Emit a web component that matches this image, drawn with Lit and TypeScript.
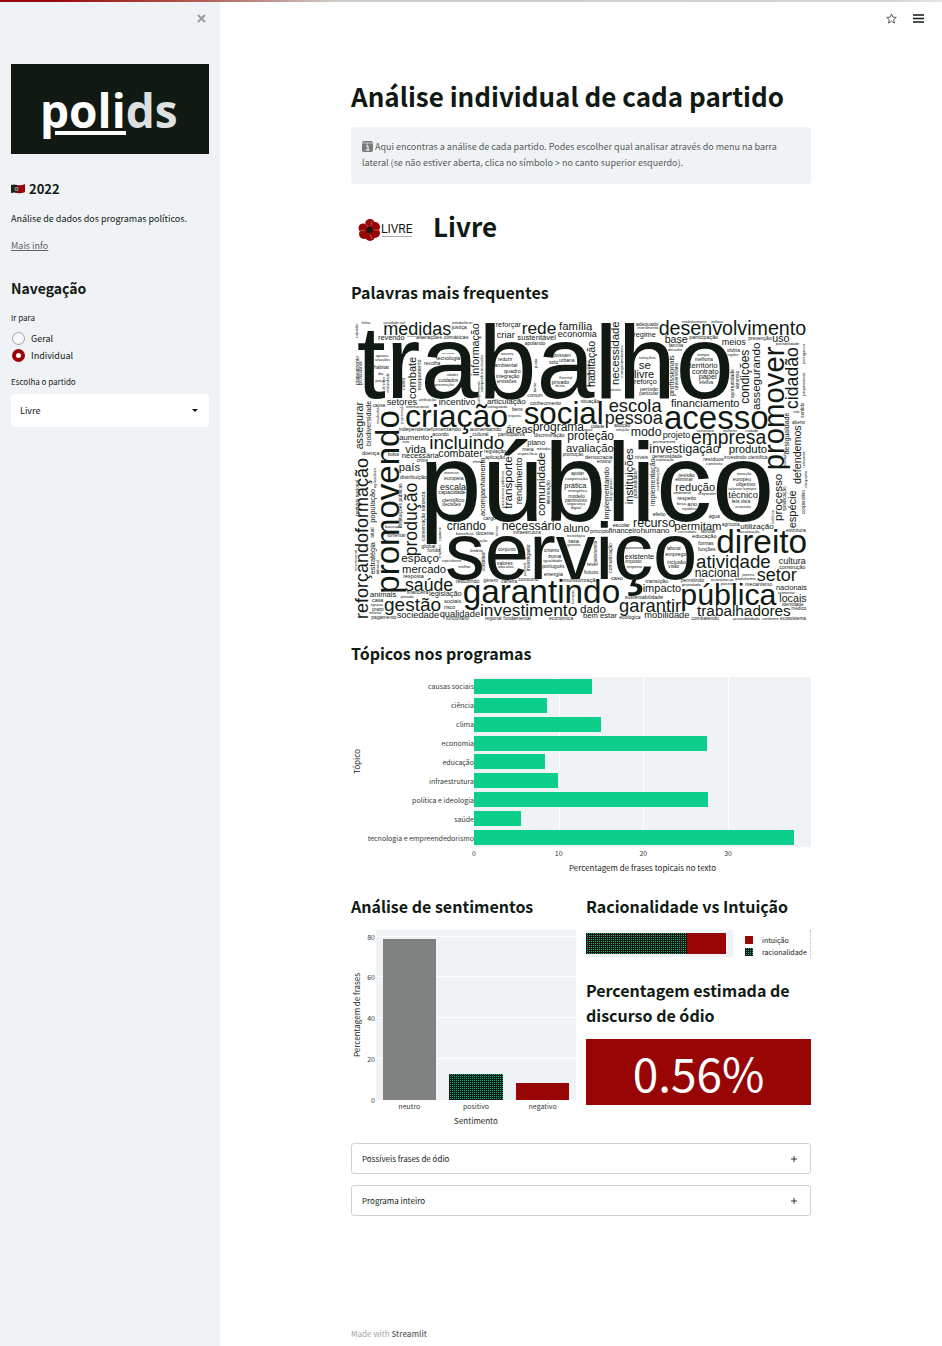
import { LitElement, html, svg, css } from "lit";
import { customElement, property } from "lit/decorators.js";
import { styleMap } from "lit/directives/style-map.js";

/** text, start, baseline, length of the word on the canvas */
type Word = [string, number, number, number];

const ACROSS: Word[] = [
  ["trabalho", 20, 262, 1130], ["público", 208, 630, 1066], ["serviço", 285, 803, 757],
  ["medidas", 100, 72, 205], ["reforçar", 437, 47, 77], ["rede", 515, 69, 105], ["família", 627, 58, 100],
  ["criar", 440, 80, 55], ["economia", 623, 79, 115], ["sustentável", 502, 88, 115], ["revendo", 84, 88, 81],
  ["alterações climáticas", 198, 85, 160], ["justiça", 305, 55, 46], ["tecnologia", 258, 147, 72],
  ["recolha", 222, 161, 50], ["apoiando", 524, 103, 61], ["possam", 610, 139, 53], ["urbana", 627, 154, 46],
  ["solo", 597, 158, 27], ["reduzir", 444, 150, 44], ["ambiental", 433, 168, 70], ["quadro", 462, 186, 51],
  ["integração", 438, 202, 72], ["emissões", 440, 216, 58], ["cuidados", 265, 213, 60], ["prevenção", 255, 226, 56],
  ["privado", 605, 218, 52], ["florestal", 628, 203, 40], ["comum", 532, 258, 46], ["habitat", 72, 174, 46],
  ["setores", 110, 283, 92], ["incentivo", 266, 283, 110], ["articulação", 411, 279, 114],
  ["conhecimento", 540, 281, 96], ["situação", 692, 276, 54], ["causa", 68, 288, 37], ["criação", 165, 347, 309],
  ["social", 521, 338, 240], ["independente", 146, 361, 97], ["fomentando", 243, 361, 90],
  ["aumentando", 360, 361, 92], ["áreas", 468, 367, 79], ["programa", 548, 360, 155], ["aumento", 148, 388, 90],
  ["acordo", 247, 374, 48], ["cultural", 367, 376, 48], ["incluindo", 238, 413, 226], ["vida", 166, 425, 63],
  ["combater", 265, 437, 132], ["necessária", 155, 442, 110], ["plano", 532, 402, 54], ["proteção", 652, 388, 140],
  ["avaliação", 648, 424, 144], ["país", 146, 479, 65], ["aplicação", 406, 444, 60], ["regulação", 402, 427, 65],
  ["discriminação", 552, 379, 93], ["doença", 36, 433, 52], ["bolsa", 113, 436, 34], ["meta", 517, 419, 33],
  ["específica", 503, 431, 57], ["linha", 35, 39, 26], ["sociedade civil", 100, 38, 66], ["estabelecer", 306, 38, 62],
  ["apoios", 77, 137, 38], ["situações", 74, 151, 48], ["dia", 84, 192, 16], ["preço", 76, 212, 28],
  ["universidade", 275, 128, 42], ["cidades", 290, 196, 36], ["natureza", 452, 132, 38], ["direta", 616, 228, 28],
  ["organismos", 172, 79, 26], ["internacional", 168, 291, 70], ["salvaguarda", 412, 290, 62], ["bens", 486, 299, 32],
  ["resposta", 474, 318, 40], ["atribuição", 206, 271, 50], ["crime", 200, 452, 34], ["efetivo", 368, 456, 32],
  ["participativa", 444, 376, 80], ["voto", 157, 397, 20],
  ["promoção", 638, 436, 62], ["métodos", 560, 417, 44],
  ["adequado", 858, 44, 67], ["regime", 850, 79, 68], ["desenvolvimento", 926, 72, 443], ["base", 944, 96, 69],
  ["participação", 1018, 83, 84], ["meios", 1115, 103, 72], ["prevenção", 1195, 87, 70], ["uso", 1267, 92, 51],
  ["se", 866, 173, 37], ["livre", 852, 200, 60], ["reforço", 852, 219, 68], ["período", 870, 240, 55],
  ["particular", 868, 253, 57], ["soluções", 866, 145, 52], ["melhoria", 1035, 149, 53], ["tempo", 1042, 136, 36],
  ["território", 1018, 172, 83], ["contrato", 1026, 189, 79], ["papel", 1046, 205, 54], ["efetiva", 1048, 220, 42],
  ["família", 956, 107, 44], ["desafio", 954, 121, 42], ["vitória", 1130, 124, 40], ["regiões", 1132, 134, 34],
  ["instrumento", 862, 54, 64], ["estabelecimento", 996, 36, 70], ["melhorar", 1084, 36, 36],
  ["possibilidade", 1278, 103, 68], ["utentes", 780, 240, 34], ["escola", 776, 303, 160], ["pessoa", 764, 338, 174],
  ["financiamento", 963, 289, 203], ["acesso", 942, 353, 313], ["modo", 842, 374, 93], ["projeto", 938, 382, 84],
  ["empresa", 1023, 400, 226], ["investigação", 898, 425, 209], ["produto", 1136, 425, 116],
  ["investindo científica", 1122, 443, 130], ["resíduos", 1060, 449, 62], ["contexto", 1068, 461, 50],
  ["democracia", 705, 443, 85], ["níveis", 855, 443, 38], ["ensino", 740, 457, 45], ["generosidade", 906, 440, 88],
  ["exploração", 918, 450, 54], ["permanente", 908, 397, 72], ["aberto", 1326, 338, 40], ["cidade", 722, 350, 40],
  ["igual", 702, 360, 26], ["adoção", 792, 349, 48], ["relação", 798, 359, 38], ["rede", 1330, 307, 18],
  ["comunitário", 1040, 362, 54], ["mulheres", 1120, 362, 42], ["cuidado", 1186, 362, 38],
  ["europeia", 282, 508, 58], ["escala", 270, 538, 78], ["capacidade", 265, 550, 81], ["científico", 276, 574, 66],
  ["decisões", 277, 584, 54], ["interesse", 282, 490, 46], ["distribuição", 150, 505, 82], ["apoiar", 663, 492, 40],
  ["cooperação", 645, 507, 70], ["prática", 643, 532, 66], ["energética", 655, 542, 56], ["modelo", 655, 562, 50],
  ["património", 645, 573, 67], ["segurança", 650, 583, 58], ["digital", 662, 593, 32], ["criando", 290, 657, 119],
  ["necessário", 455, 657, 179], ["aluno", 640, 663, 79], ["cargo", 400, 626, 37], ["infraestrutura", 490, 670, 85],
  ["docente", 378, 672, 54], ["benefício", 318, 671, 52], ["tecnológica", 650, 677, 56], ["global", 214, 710, 44],
  ["fundo", 232, 724, 38], ["espaço", 154, 753, 113], ["mercado", 156, 786, 133], ["fomentar", 112, 678, 55],
  ["baseada", 105, 650, 48], ["conjunto", 444, 719, 52], ["valores", 440, 762, 48], ["educativo", 444, 772, 46],
  ["melhor", 325, 770, 37], ["âmbito", 360, 723, 40], ["ação", 388, 694, 24], ["critério", 582, 722, 45],
  ["zona", 594, 741, 38], ["igualdade", 580, 752, 58], ["português", 577, 771, 65], ["energia", 582, 794, 57],
  ["taxa", 655, 695, 32], ["garantia", 652, 706, 40], ["resposta", 160, 801, 62], ["saúde", 165, 840, 145],
  ["género", 400, 813, 45], ["reduzindo", 318, 815, 70], ["carreira", 454, 817, 48], ["consumo", 505, 811, 62],
  ["monitorização", 640, 812, 105], ["animais", 60, 858, 79], ["financeira", 170, 850, 65], ["privada", 152, 862, 40],
  ["legislação", 237, 856, 100], ["casa", 66, 873, 34], ["agravar", 62, 886, 36], ["prazo", 66, 900, 35],
  ["material", 58, 910, 36], ["gestão", 102, 899, 171], ["sociais", 282, 875, 53], ["risco", 282, 895, 34],
  ["sociedade", 140, 921, 126], ["qualidade", 269, 918, 122], ["investimento", 390, 915, 292],
  ["pagamento", 64, 924, 74], ["dado", 690, 907, 78], ["fundamental", 460, 926, 80], ["regional", 405, 926, 50],
  ["económica", 597, 926, 71], ["funcionário", 288, 928, 68],
  ["bem estar", 699, 922, 103], ["garantindo", 338, 875, 471], ["especialmente", 276, 752, 56],
  ["revisão", 985, 499, 48], ["eliminar", 976, 510, 52], ["redução", 976, 540, 120], ["ambiente", 970, 550, 54],
  ["responder", 1044, 552, 52], ["respeito", 982, 567, 58], ["força", 980, 582, 28], ["ano", 1012, 585, 30],
  ["república", 996, 596, 46], ["europeu", 1148, 510, 56], ["objetivo", 1158, 524, 60], ["técnico", 1135, 560, 88],
  ["inovação", 1160, 492, 46], ["valorizar humano", 1135, 536, 86], ["leis", 1145, 577, 24], ["vista", 1172, 577, 28],
  ["estatuto", 1156, 590, 48], ["escolar", 788, 647, 53], ["recurso", 849, 647, 126], ["financeiro", 776, 665, 94],
  ["humano", 872, 665, 86], ["permitam", 973, 656, 141], ["agrícola", 1115, 645, 52], ["utilização", 1171, 655, 98],
  ["água", 1076, 622, 34], ["efeito", 908, 616, 38], ["princípio", 720, 667, 56], ["educação", 1026, 681, 73],
  ["formas", 1045, 703, 45], ["funções", 1044, 721, 54], ["direito", 1099, 725, 271], ["existente", 824, 744, 90],
  ["queremos", 826, 715, 54], ["imposto", 826, 757, 50], ["respeitar", 830, 770, 46], ["laboral", 950, 717, 43],
  ["emprego", 946, 734, 63], ["inclusão", 952, 758, 54], ["visão", 955, 770, 32], ["atividade", 1038, 771, 226],
  ["cultura", 1286, 758, 82], ["construção", 1288, 774, 79], ["estrutura", 1308, 663, 60], ["nacional", 1034, 798, 134],
  ["jovens", 1176, 795, 38], ["plataforma", 1156, 808, 60], ["setor", 1220, 810, 121], ["mecanismo", 1185, 825, 84],
  ["nacionais", 1278, 836, 91], ["económicos", 1082, 811, 71], ["impacto", 878, 843, 114], ["pública", 991, 882, 288],
  ["locais", 1288, 873, 81], ["identidade", 1296, 885, 66], ["garantir", 807, 903, 186],
  ["trabalhadores", 1041, 916, 279], ["médico", 1324, 898, 44], ["ecossistema", 1290, 928, 78],
  ["ecológica", 808, 925, 62], ["mobilidade", 883, 922, 136], ["sustentabilidade", 824, 863, 118],
  ["transição", 886, 815, 69], ["permitindo", 992, 814, 70], ["prioridade", 995, 825, 60], ["caso", 783, 808, 36],
  ["futuro", 702, 790, 44], ["rever", 710, 764, 34], ["combatendo", 1024, 928, 80], ["acessibilidade", 1148, 928, 84],
  ["conforme", 1236, 928, 50], ["parceria", 1112, 823, 40], ["aumentar", 1284, 848, 50], ["fiscalização", 1166, 667, 60],
  ["necessidades", 984, 667, 56], ["familiar", 1052, 666, 44],
];

/** Words that read upwards: text, baseline x, start y, length */
const UPWARDS: Word[] = [
  ["informação", 386, 195, 160], ["combate", 197, 264, 126], ["equipamento", 212, 238, 95],
  ["planeamento", 26, 222, 88], ["promovendo", 148, 848, 553], ["assegurar", 40, 415, 143],
  ["biodiversidade", 62, 405, 138], ["reforçando", 53, 924, 258], ["formação", 53, 666, 225],
  ["habitação", 734, 228, 138], ["necessidade", 808, 222, 190], ["profissionais", 973, 255, 125],
  ["condições", 1198, 278, 162], ["assegurando", 1231, 297, 202], ["cidadão", 1345, 294, 185],
  ["promover", 1302, 478, 372], ["oportunidade", 1152, 262, 88], ["sistemas", 1166, 235, 56],
  ["desigualdade", 1318, 430, 126], ["defendemos", 1352, 519, 174], ["sentido", 1362, 320, 46],
  ["instituições", 849, 580, 166], ["implementando", 776, 625, 155], ["implementação", 916, 585, 145],
  ["comunidade", 585, 615, 192], ["transporte", 486, 593, 158], ["rendimento", 516, 580, 142],
  ["acompanhamento", 406, 615, 180], ["produção", 201, 736, 219], ["população", 76, 635, 100],
  ["estratégia", 76, 790, 96], ["conservação natureza", 224, 690, 146], ["processo", 1297, 630, 140],
  ["espécie", 1339, 652, 112], ["autonomia", 740, 755, 66], ["comunicação", 787, 785, 86],
  ["maturidade", 118, 246, 60], ["subsídio", 24, 82, 46], ["custo", 165, 236, 36], ["justa", 560, 170, 28],
  ["tarde", 558, 244, 30], ["cumprimento", 390, 280, 68], ["campanha inclusão", 398, 244, 110],
  ["governamental", 720, 228, 80], ["comprometemos", 818, 200, 100], ["universitário", 984, 236, 80],
  ["portuguesa", 1366, 160, 60], ["propriedade", 1366, 254, 70], ["profissional", 36, 222, 70],
  ["território nacional", 26, 614, 110], ["agricultura", 78, 532, 62], ["instituições públicas", 156, 650, 130],
  ["atual", 72, 680, 30], ["investigador", 540, 780, 80], ["pessoal", 528, 796, 40], ["trajetos", 272, 740, 40],
  ["orçamento", 272, 690, 44], ["processos públicos", 462, 590, 110],
  ["intervenção", 600, 580, 70], ["longo prazo", 785, 570, 66],
  ["profundidade", 860, 560, 80], ["contribuição", 926, 540, 70], ["violência", 1272, 640, 44],
  ["qualificação", 1308, 600, 76], ["cooperativo", 1364, 610, 72], ["vítimas", 444, 676, 32],
  ["licenças", 672, 880, 42], ["contribuir", 404, 780, 56], ["empresarial", 20, 780, 62], ["tribunal", 88, 790, 44],
  ["programação", 158, 340, 60], ["resultados", 88, 340, 50], ["relevante", 1366, 470, 50],
  ["associações", 1308, 470, 50], ["direitos", 104, 236, 40], ["desporto", 1372, 530, 50],
];

/** Advance widths of the cloud's typeface, in thousandths of the font size. */
const ADVANCES: Record<string, number> = {
  c: 500, ç: 500, k: 500, s: 500, v: 500, x: 500, y: 500, z: 500, f: 278, t: 278, " ": 278,
  i: 222, í: 278, j: 222, l: 222, m: 833, r: 333, w: 722,
};
const sizeOf = (text: string, length: number) =>
  Math.round((length * 1000) / [...text].reduce((sum, c) => sum + (ADVANCES[c] ?? 556), 0));

@customElement("word-cloud")
export class WordCloud extends LitElement {
  static styles = css`
    :host { display: block; }
    .cloud { display: block; width: 100%; overflow: visible; font-family: "Liberation Sans", Arial, sans-serif; fill: #101a13; }
  `;
  render() {
    return html`<svg class="cloud" viewBox="3 24 1380 906" role="img" aria-label="Palavras mais frequentes">
      ${ACROSS.map(([t, x, y, n]) => svg`<text x=${x} y=${y} font-size=${sizeOf(t, n)}>${t}</text>`)}
      ${UPWARDS.map(([t, x, y, n]) => svg`<text transform="translate(${x} ${y}) rotate(-90)" font-size=${sizeOf(t, n)}>${t}</text>`)}
    </svg>`;
  }
}

@customElement("topic-chart")
export class TopicChart extends LitElement {
  @property({ attribute: false }) rows: [string, number][] = [];
  @property({ type: Number }) max = 39.8;
  static styles = css`
    :host { display: grid; grid-template-columns: 12px 111px minmax(0, 1fr); font-size: 7px; line-height: 12px; color: #333a36; }
    .title { font-size: 8px; color: #1d2620; text-align: center; }
    .side { writing-mode: vertical-rl; transform: rotate(180deg); line-height: 12px; }
    .names, .plot { display: grid; grid-auto-rows: 1fr; height: 170px; }
    .names { text-align: right; align-items: center; white-space: nowrap; }
    .name { justify-self: end; }
    .plot { position: relative; background: #eff3f6; align-items: center; }
    .rule { position: absolute; top: 0; bottom: 0; width: 1px; background: #fff; }
    .bar { position: relative; height: 15px; background: #0bcf8b; }
    .ticks { grid-column: 3; position: relative; height: 12px; }
    .tick { position: absolute; transform: translateX(-50%); }
    .under { grid-column: 3; margin-top: 3px; }
  `;
  render() {
    const at = (v: number) => `${(v / this.max) * 100}%`;
    return html`
      <div class="title side">Tópico</div>
      <div class="names">${this.rows.map(([n]) => html`<span class="name">${n}</span>`)}</div>
      <div class="plot">
        ${[10, 20, 30].map((v) => html`<i class="rule" style=${styleMap({ left: at(v) })}></i>`)}
        ${this.rows.map(([, v]) => html`<div class="bar" style=${styleMap({ width: at(v) })}></div>`)}
      </div>
      <div class="ticks">${[0, 10, 20, 30].map((v) => html`<span class="tick" style=${styleMap({ left: at(v) })}>${v}</span>`)}</div>
      <div class="title under">Percentagem de frases topicais no texto</div>`;
  }
}

@customElement("sentiment-chart")
export class SentimentChart extends LitElement {
  static styles = css`
    :host { display: grid; grid-template-columns: 12px 13px minmax(0, 1fr); font-size: 7px; line-height: 12px; color: #333a36; }
    .title { font-size: 8px; color: #1d2620; text-align: center; }
    .side { writing-mode: vertical-rl; transform: rotate(180deg); white-space: nowrap; }
    .scale { position: relative; }
    .mark { position: absolute; right: 1px; transform: translateY(50%); }
    .plot { position: relative; height: 170px; background: #eff3f6; display: grid; grid-template-columns: repeat(3, 1fr); align-items: end; justify-items: center; }
    .rule { position: absolute; left: 0; right: 0; height: 1px; background: #fff; }
    .bar { position: relative; width: 80%; }
    .neutro { background: #808282; }
    .positivo { background: conic-gradient(#0bb37a 25%, #101a13 0) 0 0 / 2px 2px; }
    .negativo { background: #970505; }
    .names { grid-column: 3; display: grid; grid-template-columns: repeat(3, 1fr); text-align: center; }
    .under { grid-column: 3; margin-top: 3px; }
  `;
  render() {
    const at = (v: number) => `${(v / 83.2) * 100}%`;
    const bars: [string, number][] = [["neutro", 79], ["positivo", 12.7], ["negativo", 8.2]];
    return html`
      <div class="title side">Percentagem de frases</div>
      <div class="scale">${[0, 20, 40, 60, 80].map((v) => html`<span class="mark" style=${styleMap({ bottom: at(v) })}>${v}</span>`)}</div>
      <div class="plot">
        ${[20, 40, 60, 80].map((v) => html`<i class="rule" style=${styleMap({ bottom: at(v) })}></i>`)}
        ${bars.map(([n, v]) => html`<div class="bar ${n}" style=${styleMap({ height: at(v) })}></div>`)}
      </div>
      <div class="names">${bars.map(([n]) => html`<span>${n}</span>`)}</div>
      <div class="title under">Sentimento</div>`;
  }
}

@customElement("app-root")
export class AppRoot extends LitElement {
  static styles = css`
    :host { display: block; font-family: "Noto Sans CJK JP", "Noto Sans", sans-serif; font-size: 9px; line-height: 16px; color: #101a13; background: #fff; }
    * { box-sizing: border-box; }
    h1, h2, h3, p { margin: 0; }
    .strip { position: absolute; inset: 0 0 auto; height: 2px; background: linear-gradient(90deg, #970505 5%, #b4605a 22%, #cfcfc9 36%, #d4d4ce 94%, #e6e6e2); }
    .page { display: grid; grid-template-columns: 220px minmax(0, 1fr); min-height: 100vh; }
    button { border: 0; background: none; padding: 0; display: block; cursor: pointer; }
    svg { display: block; }

    .sidebar { background: #eff3f6; padding: 13px 11px; }
    .close { margin: 0 2px 0 auto; }
    .brand { width: 100%; margin-top: 40px; }
    .brand-text { font: 700 46px "Open Sans", "Noto Sans", sans-serif; fill: #fff; }
    .soft { fill: #dde0e0; }
    .year { display: flex; align-items: center; gap: 4px; font-size: 13px; line-height: 20px; font-weight: 600; margin-top: 25px; }
    .about { margin-top: 12px; }
    .more { display: inline-block; margin-top: 11px; color: #5e6461; }
    .nav-title { font-size: 14px; line-height: 20px; font-weight: 600; margin-top: 24px; }
    fieldset { border: 0; padding: 0; margin: 12px 0 0; min-width: 0; }
    legend, .label { display: block; font-size: 8px; line-height: 16px; padding: 0; }
    legend { margin-bottom: 4px; }
    .option { display: flex; align-items: center; gap: 6px; height: 17px; width: max-content; }
    .radio { appearance: none; width: 13px; height: 13px; margin: 0 0 0 1px; border: 1px solid #a0a3a3; border-radius: 50%; background: #f7f9fa; }
    .radio:checked { border: 4px solid #970505; background: #fff; }
    .label { margin-top: 10px; }
    .pick { position: relative; margin-top: 4px; }
    select { appearance: none; width: 100%; height: 33px; border: 0; border-radius: 3px; background: #fff; color: inherit; font: inherit; padding: 0 9px; }
    .caret { position: absolute; right: 11px; top: 15px; pointer-events: none; }

    .main { display: flex; flex-direction: column; position: relative; padding: 0 20px 4px; }
    .tools { position: absolute; top: 13px; right: 18px; display: flex; gap: 16px; align-items: center; }
    .content { width: 100%; max-width: 460px; margin: 0 auto; flex: 1; padding-top: 78px; }
    h1 { font-size: 26px; line-height: 36px; font-weight: 700; }
    h3 { font-size: 16px; line-height: 25px; font-weight: 600; }
    .info { margin-top: 13px; padding: 12px 11px; min-height: 57px; background: #eff3f6; border-radius: 4px; color: #555b58; }
    .badge { display: inline-block; vertical-align: -2px; }
    .party { display: grid; grid-template-columns: 72px 1fr; gap: 10px; margin-top: 24px; align-items: center; }
    .logo { margin: 8px 0 0 7px; }
    .logo-text { font: 12px "Roboto", sans-serif; fill: #101a13; }
    .words { margin-top: 36px; }
    .cloud { margin-top: 14px; }
    .topics { margin-top: 20px; }
    .chart { margin-top: 11px; }
    .pair { display: grid; grid-template-columns: repeat(2, minmax(0, 1fr)); gap: 10px; margin-top: 20px; }
    .ratio { display: grid; grid-template-columns: 147px 1fr; gap: 12px; margin-top: 11px; border-right: 1px dotted #bbb; }
    .track { display: flex; height: 27px; padding: 3px 7px 3px 0; background: #eff3f6; }
    .rational { flex: 101; background: conic-gradient(#0bb37a 25%, #101a13 0) 0 0 / 2px 2px; }
    .intuitive { flex: 39; background: #970505; }
    .legend { font-size: 7px; line-height: 12px; padding-top: 4px; }
    .entry { display: flex; align-items: center; gap: 9px; height: 12px; }
    .key { width: 8px; height: 8px; flex: none; }
    .red { background: #970505; }
    .green { background: conic-gradient(#0bb37a 25%, #101a13 0) 0 0 / 2px 2px; }
    .hate { margin-top: 20px; }
    .rate { margin-top: 11px; height: 66px; display: grid; place-items: center; background: #970505; color: #fff; font-size: 46px; line-height: 66px; }
    details { border: 1px solid #d0d3d3; border-radius: 3px; margin-top: 11px; }
    .first { margin-top: 16px; }
    summary { list-style: none; display: flex; justify-content: space-between; align-items: center; height: 29px; padding: 0 12px 0 10px; font-size: 8px; cursor: pointer; }
    .body { padding: 4px 10px 10px; }
    .footer { width: 100%; max-width: 460px; margin: 0 auto; font-size: 8px; color: #a3a6a5; }
    .footer a { color: #5e6461; text-decoration: none; font-weight: 500; }
  `;

  topics: [string, number][] = [
    ["causas sociais", 13.95], ["ciência", 8.6], ["clima", 15], ["economia", 27.5], ["educação", 8.35],
    ["infraestrutura", 9.9], ["política e ideologia", 27.6], ["saúde", 5.55], ["tecnologia e empreendedorismo", 37.8],
  ];

  plus = html`<svg width="8" height="8" viewBox="0 0 8 8" aria-hidden="true"><path d="M4 1v6M1 4h6" stroke="#333a36" /></svg>`;

  render() {
    return html`
      <div class="page">
        <aside class="sidebar">
          <button class="close" aria-label="Fechar"><svg width="11" height="11" viewBox="0 0 11 11"><path d="M2 2l7 7M9 2L2 9" stroke="#9a9d9d" stroke-width="2" /></svg></button>
          <svg class="brand" viewBox="0 0 198 90" role="img" aria-label="polids">
            <rect width="198" height="90" fill="#101a13" />
            <text class="brand-text" x="29" y="64">poli<tspan class="soft">ds</tspan></text>
            <rect x="42" y="66" width="2" height="6" fill="#101a13" />
            <rect x="44" y="67" width="71" height="4" fill="#fff" />
          </svg>
          <h2 class="year">
            <svg width="14" height="10" viewBox="0 0 14 10" aria-hidden="true"><path d="M0 1q3-1 6 0v8q-3-1-6 0z" fill="#17241b" /><path d="M6 1q4 1 8-1v8q-4 2-8 1z" fill="#970505" /><circle cx="5.5" cy="5" r="2" fill="#a9abaa" /><path d="M4.5 4h2v1.500l-1 1-1-1z" fill="#444" /></svg>
            2022
          </h2>
          <p class="about">Análise de dados dos programas políticos.</p>
          <a class="more" href="#info">Mais info</a>
          <h2 class="nav-title">Navegação</h2>
          <fieldset>
            <legend>Ir para</legend>
            <label class="option"><input class="radio" type="radio" name="view" value="geral" />Geral</label>
            <label class="option"><input class="radio" type="radio" name="view" value="individual" checked />Individual</label>
          </fieldset>
          <label class="label" for="party">Escolha o partido</label>
          <div class="pick">
            <select id="party"><option>Livre</option></select>
            <svg class="caret" width="6" height="4" viewBox="0 0 6 4" aria-hidden="true"><path d="M0 0h6L3 3z" fill="#101a13" /></svg>
          </div>
        </aside>

        <main class="main">
          <div class="tools">
            <button aria-label="Favorito"><svg width="11" height="11" viewBox="0 0 24 24" fill="none" stroke="#4a504d" stroke-width="2"><path d="M12 2l3 7 7.5.6-5.700 5 1.700 7.400L12 18l-6.500 4 1.700-7.400-5.700-5L9 9z" /></svg></button>
            <button aria-label="Menu"><svg width="11" height="9" viewBox="0 0 11 9"><path d="M0 1h11M0 4.500h11M0 8h11" stroke="#101a13" stroke-width="1.3" /></svg></button>
          </div>
          <div class="content">
            <h1>Análise individual de cada partido</h1>
            <p class="info">
              <svg class="badge" width="11" height="11" viewBox="0 0 11 11" aria-hidden="true"><rect width="11" height="11" rx="2" fill="#777b7b" /><path d="M0 2h11" stroke="#c4c7c8" /><path d="M4 5h2v4M3.500 9h4M5 3h1" stroke="#fff" fill="none" /></svg>
              Aqui encontras a análise de cada partido. Podes escolher qual analisar através do menu na barra lateral (se não estiver aberta, clica no símbolo &gt; no canto superior esquerdo).
            </p>
            <div class="party">
              <svg class="logo" width="56" height="24" viewBox="0 0 56 24" role="img" aria-label="Livre">
                <g fill="#970505"><circle cx="12" cy="6" r="5" /><circle cx="17" cy="9" r="5" /><circle cx="17" cy="15" r="5" /><circle cx="12" cy="18" r="5" /><circle cx="6" cy="16" r="5" /><circle cx="5" cy="10" r="4.5" /><circle cx="11" cy="12" r="6" /></g>
                <path d="M14 3l-1 5M21 12l-5 0M14 21l-2-5M2 13l5-1M7 5l3 4" stroke="#d98e8a" stroke-width=".6" />
                <circle cx="11.5" cy="12" r="3" fill="#101a13" />
                <text class="logo-text" x="23" y="15">LIVRE</text>
                <path d="M24 18.500h30" stroke="#a9abaa" />
              </svg>
              <h1>Livre</h1>
            </div>
            <h3 class="words">Palavras mais frequentes</h3>
            <word-cloud class="cloud"></word-cloud>
            <h3 class="topics">Tópicos nos programas</h3>
            <topic-chart class="chart" .rows=${this.topics}></topic-chart>
            <div class="pair">
              <section>
                <h3>Análise de sentimentos</h3>
                <sentiment-chart class="chart"></sentiment-chart>
              </section>
              <section>
                <h3>Racionalidade vs Intuição</h3>
                <div class="ratio">
                  <div class="track"><div class="rational"></div><div class="intuitive"></div></div>
                  <div class="legend">
                    <div class="entry"><i class="key red"></i>intuição</div>
                    <div class="entry"><i class="key green"></i>racionalidade</div>
                  </div>
                </div>
                <h3 class="hate">Percentagem estimada de discurso de ódio</h3>
                <div class="rate">0.56%</div>
              </section>
            </div>
            <details class="first"><summary>Possíveis frases de ódio ${this.plus}</summary><div class="body">0.56%</div></details>
            <details><summary>Programa inteiro ${this.plus}</summary><div class="body">Livre</div></details>
          </div>
          <footer class="footer">Made with <a href="#streamlit">Streamlit</a></footer>
        </main>
      </div>
      <div class="strip"></div>`;
  }
}
